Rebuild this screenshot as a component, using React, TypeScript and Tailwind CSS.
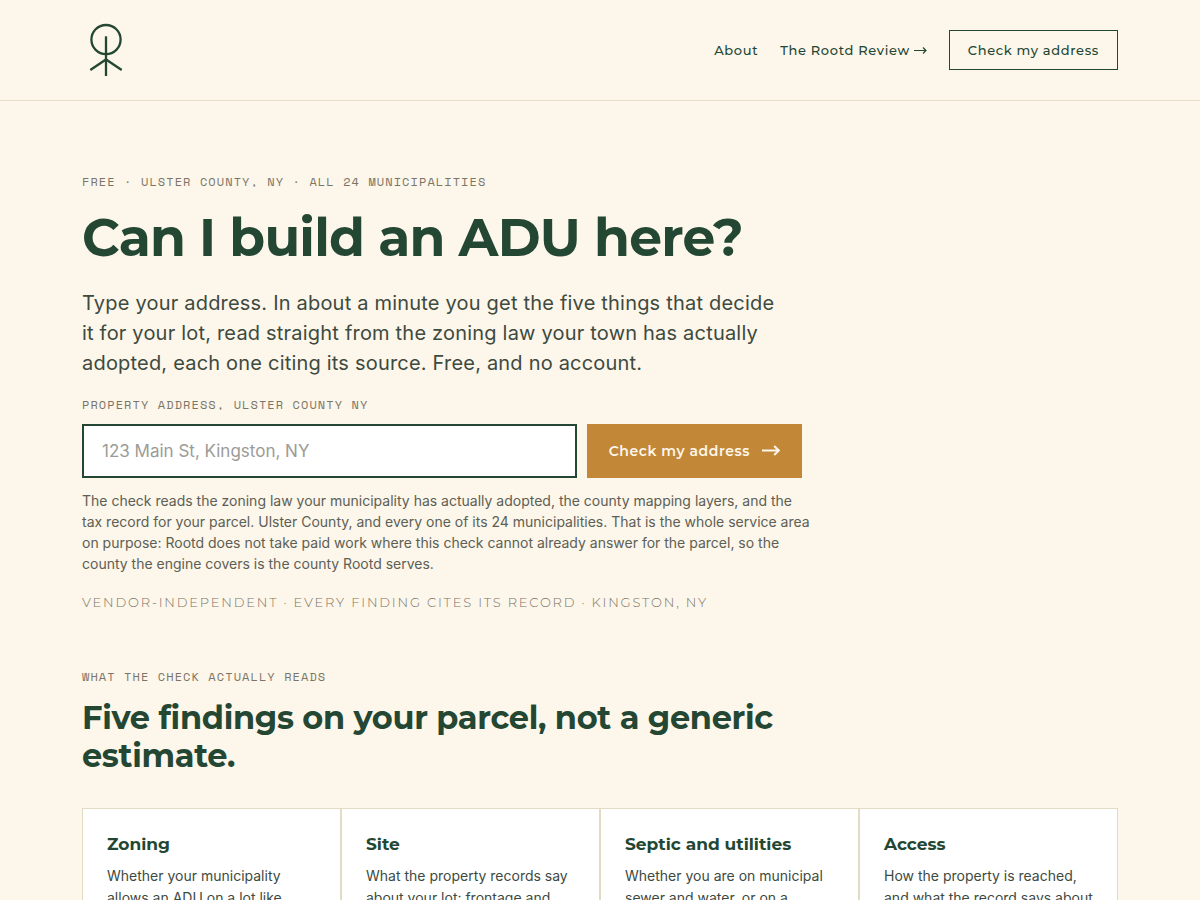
import type { ReactNode } from 'react';

interface Finding {
  title: string;
  body: string;
}

const findings: Finding[] = [
  { title: 'Zoning', body: 'Whether your municipality allows an ADU on a lot like' },
  { title: 'Site', body: 'What the property records say about your lot: frontage and' },
  { title: 'Septic and utilities', body: 'Whether you are on municipal sewer and water, or on a' },
  { title: 'Access', body: 'How the property is reached, and what the record says about' },
];

function Logo() {
  return (
    <svg
      className="h-14 w-12"
      viewBox="0 0 48 56"
      fill="none"
      stroke="currentColor"
      strokeWidth="2.3"
      aria-hidden="true"
    >
      <circle cx="24" cy="17.6" r="14.6" />
      <path d="M24 14.3V54" />
      <path d="M8.3 48 24 37.5 39.7 48" />
    </svg>
  );
}

function Arrow() {
  return (
    <svg
      className="h-3 w-[18px]"
      viewBox="0 0 18 12"
      fill="none"
      stroke="currentColor"
      strokeWidth="2"
      aria-hidden="true"
    >
      <path d="M0 5.5H17" />
      <path d="M12.2 1 16.8 5.5 12.2 10" />
    </svg>
  );
}

function NavArrow() {
  return (
    <svg
      className="h-2 w-[13px]"
      viewBox="0 0 13 8"
      fill="none"
      stroke="currentColor"
      strokeWidth="1.2"
      aria-hidden="true"
    >
      <path d="M0 4.5h12M9 1.5l3 3-3 3" />
    </svg>
  );
}

function Eyebrow({ children }: { children: ReactNode }) {
  return (
    <p className="font-['Space_Mono','Liberation_Mono',monospace] text-xs leading-5 tracking-[0.09em] text-[#7a7566] uppercase">
      {children}
    </p>
  );
}

function Header() {
  return (
    <header className="border-b border-[#e8dccb]">
      <div className="mx-auto flex max-w-[1100px] items-center justify-between px-8 py-[22px]">
        <a href="#home" aria-label="Rootd home">
          <Logo />
        </a>
        <nav className="flex items-center gap-[22px] font-['Montserrat','Inter',sans-serif] text-[13px] leading-5 font-medium tracking-wider">
          <a href="#about">About</a>
          <a href="#review" className="flex items-center gap-1">
            The Rootd Review
            <NavArrow />
          </a>
          <a href="#check" className="border border-[#234733] px-[18px] py-[9px]">
            Check my address
          </a>
        </nav>
      </div>
    </header>
  );
}

function AddressCheck() {
  return (
    <form id="check" className="mt-[17px] max-w-[720px]" onSubmit={(e) => e.preventDefault()}>
      <label
        htmlFor="address"
        className="block font-['Space_Mono','Liberation_Mono',monospace] text-xs leading-5 tracking-[0.09em] text-[#7a7566] uppercase"
      >
        Property address, Ulster County NY
      </label>
      <div className="mt-[9px] flex gap-2.5">
        <input
          id="address"
          type="text"
          placeholder="123 Main St, Kingston, NY"
          className="h-[54px] min-w-0 flex-1 border-2 border-[#234733] bg-white px-[18px] text-[17px] placeholder:text-[#9b9b98]"
        />
        <button
          type="submit"
          className="flex items-center gap-3 bg-[#c28838] px-[22px] font-['Montserrat','Inter',sans-serif] text-sm font-semibold tracking-[0.04em] text-[#fdf6ea]"
        >
          Check my address
          <Arrow />
        </button>
      </div>
    </form>
  );
}

export default function App() {
  return (
    <div className="min-h-screen bg-[#fdf6ea] font-['Inter',sans-serif] text-[#234733]">
      <Header />

      <main className="mx-auto max-w-[1100px] px-8">
        <section className="max-w-[728px] pt-[71px]">
          <Eyebrow>Free · Ulster County, NY · All 24 municipalities</Eyebrow>
          <h1 className="mt-4 font-['Montserrat','Inter',sans-serif] text-[52px] leading-[60px] font-bold tracking-[-0.015em]">
            Can I build an ADU here?
          </h1>
          <p className="mt-5 max-w-[700px] text-xl leading-[30px] tracking-[0.01em] text-[#3d4a3f]">
            Type your address. In about a minute you get the five things that decide it for your lot,
            read straight from the zoning law your town has actually adopted, each one citing its
            source. Free, and no account.
          </p>

          <AddressCheck />

          <p className="mt-3 text-sm leading-[21px] text-[#5c6055]">
            The check reads the zoning law your municipality has actually adopted, the county mapping
            layers, and the tax record for your parcel. Ulster County, and every one of its 24
            municipalities. That is the whole service area on purpose: Rootd does not take paid work
            where this check cannot already answer for the parcel, so the county the engine covers is
            the county Rootd serves.
          </p>
          <p className="mt-[18px] font-['Montserrat','Inter',sans-serif] text-[13px] leading-5 font-light tracking-[0.14em] text-[#7a7566] uppercase">
            Vendor-independent · Every finding cites its record · Kingston, NY
          </p>
        </section>

        <section className="pt-[55px] pb-16">
          <Eyebrow>What the check actually reads</Eyebrow>
          <h2 className="mt-3 max-w-[720px] font-['Montserrat','Inter',sans-serif] text-[32px] leading-[38px] font-bold tracking-[-0.01em]">
            Five findings on your parcel, not a generic estimate.
          </h2>
          <div className="mt-[33px] grid grid-cols-2 lg:grid-cols-4">
            {findings.map(({ title, body }) => (
              <article key={title} className="border border-[#e3dcc5] bg-white p-6">
                <h3 className="font-['Montserrat','Inter',sans-serif] text-[17px] leading-[22px] font-bold">
                  {title}
                </h3>
                <p className="mt-2.5 text-sm leading-[22px] text-[#3d4a3f]">{body}</p>
              </article>
            ))}
          </div>
        </section>
      </main>
    </div>
  );
}
